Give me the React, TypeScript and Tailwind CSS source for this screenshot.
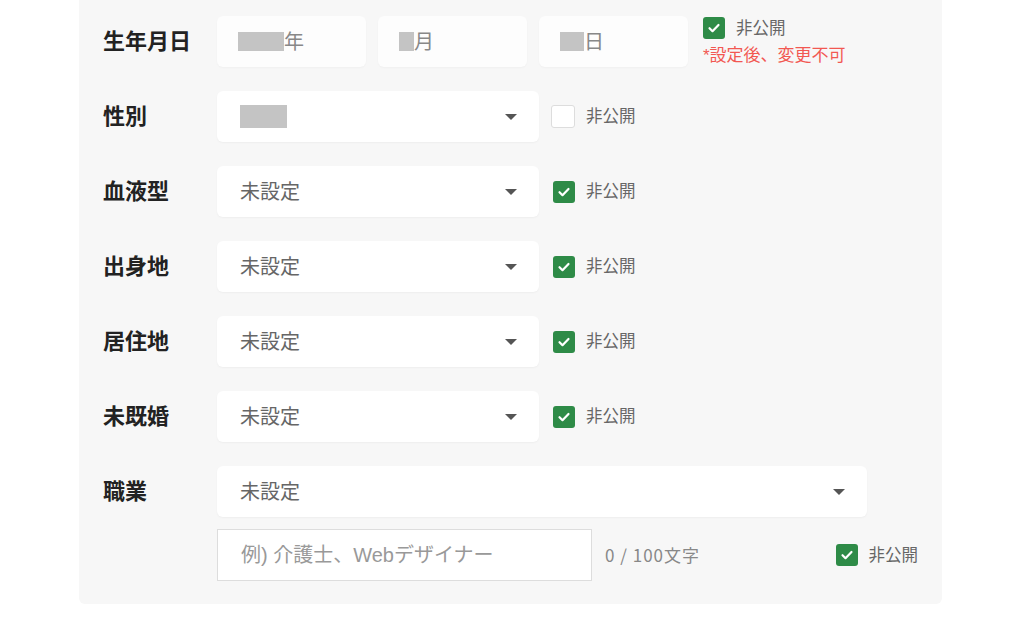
import React from "react";

const font = "font-['Liberation_Sans','Noto_Sans_CJK_JP',sans-serif]";

const Check: React.FC<{ checked?: boolean }> = ({ checked = true }) =>
  checked ? (
    <span className="flex h-[22px] w-[22px] items-center justify-center rounded-[3px] bg-[#2e8b47]">
      <svg width="14" height="14" viewBox="0 0 14 14" fill="none">
        <path
          d="M2.5 7.2l3 3 6-6.2"
          stroke="#fff"
          strokeWidth="2.2"
          strokeLinecap="round"
          strokeLinejoin="round"
        />
      </svg>
    </span>
  ) : (
    <span className="block h-[23px] w-[24px] rounded-[3px] border border-[#dddddd] bg-white" />
  );

const Private: React.FC<{ checked?: boolean; className?: string }> = ({
  checked = true,
  className = "",
}) => (
  <label className={`flex items-center ${className}`}>
    <Check checked={checked} />
    <span className="ml-[11px] text-[16.5px] text-[#666]">非公開</span>
  </label>
);

const Caret = () => (
  <span className="block h-0 w-0 border-l-[6px] border-r-[6px] border-t-[6px] border-l-transparent border-r-transparent border-t-[#555]" />
);

const Select: React.FC<{ children: React.ReactNode; width: string }> = ({
  children,
  width,
}) => (
  <div
    className={`flex h-[51px] ${width} items-center justify-between rounded-md bg-white pl-[23px] pr-[22px] shadow-[0_1px_2px_rgba(0,0,0,0.04)]`}
  >
    <div className="text-[20px] text-[#666]">{children}</div>
    <Caret />
  </div>
);

const Label: React.FC<{ text: string }> = ({ text }) => (
  <div className="flex h-[51px] w-[114px] shrink-0 items-center text-[22px] font-bold text-[#222]">
    {text}
  </div>
);

const DateBox: React.FC<{ block: string; unit: string }> = ({ block, unit }) => (
  <div className="flex h-[51px] w-[149px] items-center rounded-md bg-[#fdfdfd] pl-[21px] shadow-[0_1px_2px_rgba(0,0,0,0.03)]">
    <span className={`block h-[19px] ${block} bg-[#c4c4c4]`} />
    <span className="text-[20px] text-[#888]">{unit}</span>
  </div>
);

const rows = ["血液型", "出身地", "居住地", "未既婚"];

export default function App() {
  return (
    <div className={`h-[620px] w-[1024px] overflow-hidden bg-white ${font}`}>
      <div className="ml-[79px] flex w-[863px] flex-col gap-[24px] rounded-b-md bg-[#f7f7f7] pb-[23px] pl-[24px] pr-[24px] pt-[16px]">
        <div className="flex h-[51px]">
          <Label text="生年月日" />
          <div className="flex gap-[12px]">
            <DateBox block="w-[46px]" unit="年" />
            <DateBox block="w-[15px]" unit="月" />
            <DateBox block="w-[24px]" unit="日" />
          </div>
          <div className="ml-[15px] flex flex-col">
            <Private />
            <span className="mt-[3px] text-[17px] leading-[24px] text-[#f25852]">*設定後、変更不可</span>
          </div>
        </div>

        <div className="flex items-center">
          <Label text="性別" />
          <Select width="w-[322px]">
            <span className="block h-[23px] w-[47px] bg-[#c4c4c4]" />
          </Select>
          <Private checked={false} className="ml-[12px]" />
        </div>

        {rows.map((r) => (
          <div key={r} className="flex items-center">
            <Label text={r} />
            <Select width="w-[322px]">未設定</Select>
            <Private className="ml-[14px]" />
          </div>
        ))}

        <div className="flex">
          <Label text="職業" />
          <div className="flex flex-1 flex-col gap-[12px]">
            <Select width="w-[650px]">未設定</Select>
            <div className="flex items-center">
              <div className="flex h-[52px] w-[375px] items-center border border-[#dddddd] bg-white pl-[23px] text-[20px] text-[#999]">
                例) 介護士、Webデザイナー
              </div>
              <span className="ml-[13px] font-['Noto_Sans_CJK_JP',sans-serif] text-[17px] tracking-[1px] text-[#888]">
                0 / 100文字
              </span>
              <Private className="ml-auto" />
            </div>
          </div>
        </div>
      </div>
    </div>
  );
}
